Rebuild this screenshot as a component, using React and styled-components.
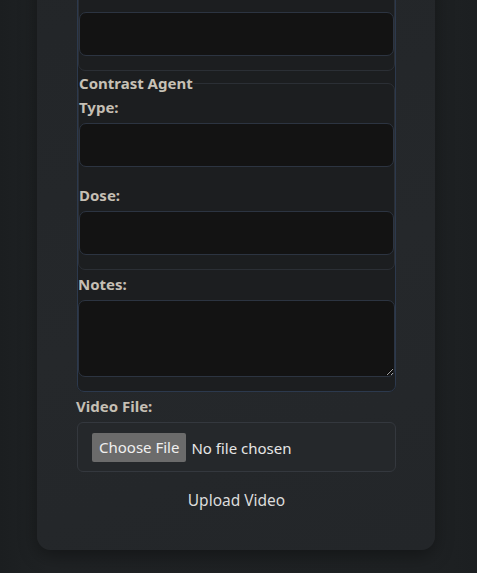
import React from "react";
import styled, { createGlobalStyle } from "styled-components";

const GlobalStyle = createGlobalStyle`
  html, body {
    margin: 0;
    padding: 0;
    background: #1d2022;
    font-family: "Noto Sans", "Open Sans", sans-serif;
  }
`;

// Viewport that keeps the bottom of the form in view (page is scrolled down)
const Page = styled.div`
  height: 100vh;
  overflow: hidden;
  display: flex;
  flex-direction: column;
  justify-content: flex-end;
  padding: 0 0 23px 37px;
  box-sizing: border-box;
  background: linear-gradient(90deg, #1b1e20 0%, #1f2224 10%, #1e2123 90%, #1c1f21 100%);
`;

const Card = styled.div`
  flex-shrink: 0;
  width: 398px;
  box-sizing: border-box;
  padding: 24px 39px 30px 40px;
  border-radius: 0 0 14px 14px;
  background: linear-gradient(160deg, #222528 0%, #25282b 60%, #232629 100%);
  box-shadow: 0 6px 18px rgba(0, 0, 0, 0.35);
`;

const Form = styled.form`
  display: flex;
  flex-direction: column;
`;

const Group = styled.fieldset`
  margin: 0;
  padding: 0;
  border: 1px solid #2c394d;
  border-radius: 7px;
  background: #1c1e20;
  min-width: 0;
`;

const SubGroup = styled.fieldset`
  margin: 2px 0 0;
  padding: 0;
  border: 1px solid #2b2f35;
  border-radius: 7px;
  background: #1c1e20;
  min-width: 0;
`;

const Legend = styled.legend`
  padding: 0;
  font-size: 15px;
  line-height: 20px;
  font-weight: 700;
  color: #c7c1b6;
`;

const Label = styled.label`
  display: block;
  margin: 0 0 6px ${(p) => (p.$outer ? "-1px" : "0")};
  padding-top: 4px;
  font-size: 15px;
  line-height: 20px;
  font-weight: 700;
  color: #c5bfb4;
`;

const Input = styled.input`
  display: block;
  width: 100%;
  height: 44px;
  box-sizing: border-box;
  margin: 0 0 14px;
  padding: 0 10px;
  background: #131313;
  border: 1px solid #2c3441;
  border-radius: 7px;
  color: #ddd;
  font: inherit;
`;

const TextArea = styled.textarea`
  display: block;
  width: 100%;
  height: 77px;
  box-sizing: border-box;
  margin: 0 0 14px;
  padding: 8px 10px;
  background: #131313;
  border: 1px solid #2c3441;
  border-radius: 7px;
  color: #ddd;
  font: inherit;
  resize: vertical;
`;

const FileBox = styled.div`
  display: flex;
  align-items: center;
  height: 50px;
  box-sizing: border-box;
  padding: 0 14px;
  border: 1px solid #34383e;
  border-radius: 6px;
  background: #25282b;
`;

const FileInput = styled.input`
  font-family: "Noto Sans", "Open Sans", sans-serif;
  font-size: 15px;
  color: #e6e6e6;

  &::file-selector-button {
    margin-right: 5px;
    height: 29px;
    padding: 0 7px;
    border: none;
    border-radius: 2px;
    background: #6b6b6b;
    color: #f0f0f0;
    font-family: inherit;
    font-size: 15px;
  }
`;

const Submit = styled.button`
  align-self: center;
  height: 40px;
  margin-top: 8px;
  padding: 0 12px;
  border: none;
  background: transparent;
  color: #dcdcdc;
  font-family: inherit;
  font-size: 15.5px;
`;

export default function App() {
  return (
    <>
      <GlobalStyle />
      <Page>
        <Card>
          <Form onSubmit={(e) => e.preventDefault()}>
            <Group>
              <SubGroup>
                <Legend>Acquisition</Legend>
                <Label htmlFor="res-w">Resolution:</Label>
                <Input id="res-w" type="text" />
                <Input id="res-h" type="text" />
              </SubGroup>
              <SubGroup>
                <Legend>Contrast Agent</Legend>
                <Label htmlFor="ctype">Type:</Label>
                <Input id="ctype" type="text" />
                <Label htmlFor="cdose">Dose:</Label>
                <Input id="cdose" type="text" />
              </SubGroup>
              <Label htmlFor="notes">Notes:</Label>
              <TextArea id="notes" />
            </Group>
            <Label htmlFor="video" $outer>
              Video File:
            </Label>
            <FileBox>
              <FileInput id="video" type="file" accept="video/*" />
            </FileBox>
            <Submit type="submit">Upload Video</Submit>
          </Form>
        </Card>
      </Page>
    </>
  );
}
